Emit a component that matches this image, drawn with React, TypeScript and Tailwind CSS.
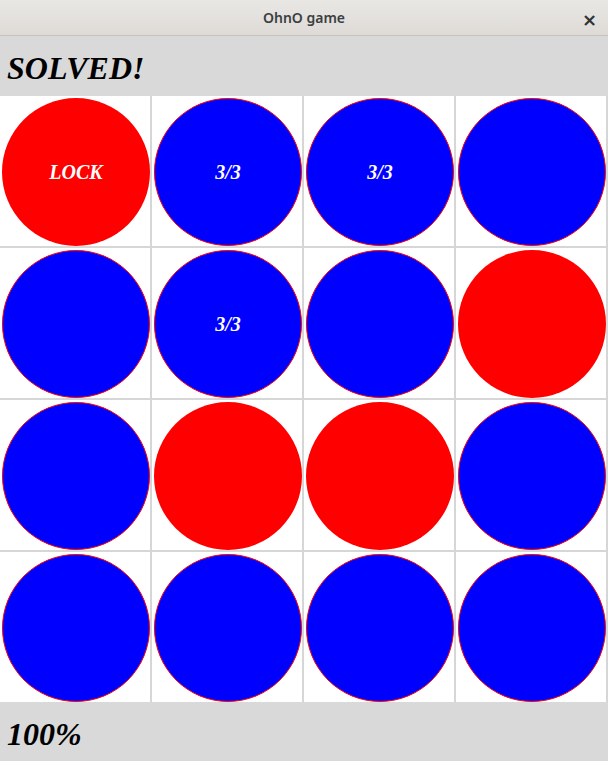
const board: { color: 'red' | 'blue'; label?: string }[] = [
  { color: 'red', label: 'LOCK' },
  { color: 'blue', label: '3/3' },
  { color: 'blue', label: '3/3' },
  { color: 'blue' },
  { color: 'blue' },
  { color: 'blue', label: '3/3' },
  { color: 'blue' },
  { color: 'red' },
  { color: 'blue' },
  { color: 'red' },
  { color: 'red' },
  { color: 'blue' },
  { color: 'blue' },
  { color: 'blue' },
  { color: 'blue' },
  { color: 'blue' },
]

const serif = "font-['Liberation_Serif',_'Times_New_Roman',_serif]"

export default function App() {
  return (
    <div className="w-[608px] h-[761px] flex flex-col bg-[#d9d9d9] overflow-hidden">
      {/* title bar */}
      <div className="h-[36px] flex items-center justify-center relative bg-gradient-to-b from-[#e9e7e4] to-[#dedbd7] border-b border-[#c6c2bd] shrink-0">
        <span className="text-[14px] font-semibold text-[#3a3f41] font-['Noto_Sans',_sans-serif]">OhnO game</span>
        <span className="absolute right-[11px] top-[6px] text-[18px] font-bold text-[#2e3436] font-['DejaVu_Sans',_sans-serif]">×</span>
      </div>

      {/* status */}
      <div className="h-[60px] flex items-center px-[7px] pt-[4px] shrink-0">
        <span className={`${serif} italic font-bold text-[32px] text-black leading-none`}>SOLVED!</span>
      </div>

      {/* board */}
      <div className="grid grid-cols-[repeat(4,150px)] grid-rows-[repeat(4,150px)] gap-[2px] bg-[#d6d6d6] shrink-0">
        {board.map((c, i) => (
          <div key={i} className="bg-white pl-[2px] pt-[2px]">
            <div
              className={
                c.color === 'red'
                  ? 'w-[148px] h-[148px] rounded-full bg-[#ff0000] flex items-center justify-center'
                  : 'w-[148px] h-[148px] rounded-full bg-[#0000ff] border border-[#ff0000] flex items-center justify-center'
              }
            >
              {c.label && (
                <span className={`${serif} italic font-bold text-[20px] text-white leading-none`}>{c.label}</span>
              )}
            </div>
          </div>
        ))}
      </div>

      {/* progress */}
      <div className="flex-1 flex items-center px-[7px] pt-[4px]">
        <span className={`${serif} italic font-bold text-[32px] text-black leading-none`}>100%</span>
      </div>
    </div>
  )
}
